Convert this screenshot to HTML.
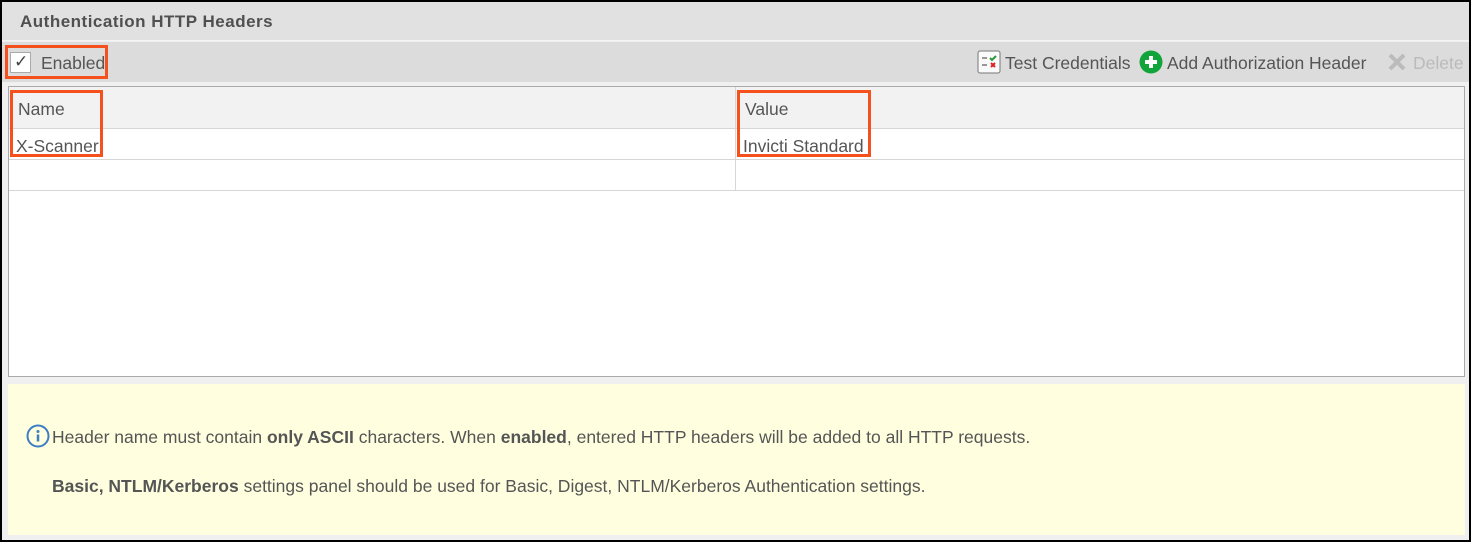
<!DOCTYPE html>
<html><head><style>
*{margin:0;padding:0;box-sizing:border-box}
body{width:1471px;height:542px;background:#000;font-family:"Liberation Sans",sans-serif;color:#555;overflow:hidden;position:relative}
.wrap{position:absolute;left:2px;top:2px;width:1467px;height:538px;background:#f0f0f0}
.title{position:absolute;left:0;top:0;width:100%;height:39px;background:#e1e1e1;border-bottom:1px solid #f4f4f4}
.title span{position:absolute;left:18px;top:10px;font-weight:bold;font-size:17px;letter-spacing:0.5px;color:#505050}
.tb{position:absolute;left:0;top:40px;width:100%;height:40px;background:#dcdcdc;font-size:17.5px}
.abs{position:absolute}
.red{position:absolute;border:3px solid #f4511e}
.table{position:absolute;left:6px;top:84px;width:1457px;height:291px;background:#fff;border:1px solid #aaa}
.row{position:absolute;left:0;width:100%;border-bottom:1px solid #d6d6d6;font-size:17.5px}
.info{position:absolute;left:6px;top:382px;width:1457px;height:151px;background:#ffffe0;font-size:17.5px}
</style></head><body>
<div class="wrap">
<div class="title"><span>Authentication HTTP Headers</span></div>
<div class="tb">
 <div class="abs" style="left:8px;top:10px;width:21px;height:21px;background:#fff;border:1px solid #aaa"></div>
 <div class="abs" style="left:12px;top:10px;font-size:17px;color:#444">✓</div>
 <div class="abs" style="left:39px;top:11px">Enabled</div>
 <svg class="abs" style="left:975px;top:8px" width="24" height="24" viewBox="0 0 24 24"><rect x="1" y="1" width="22" height="22" rx="2" fill="#fafafa" stroke="#777"/><path d="M5 8h5M5 15h5" stroke="#777" stroke-width="1.5"/><path d="M13 8l2 2 4-4" stroke="#2a9a3a" stroke-width="2" fill="none"/><path d="M14 13l4 4M18 13l-4 4" stroke="#d22" stroke-width="2"/></svg>
 <div class="abs" style="left:1003px;top:11px">Test Credentials</div>
 <svg class="abs" style="left:1137px;top:8px" width="24" height="24" viewBox="0 0 24 24"><circle cx="12" cy="12" r="11.5" fill="#10a53a"/><path d="M12 6v12M6 12h12" stroke="#fff" stroke-width="4"/></svg>
 <div class="abs" style="left:1165px;top:11px">Add Authorization Header</div>
 <svg class="abs" style="left:1385px;top:10px" width="20" height="20" viewBox="0 0 20 20"><path d="M3 3l14 14M17 3L3 17" stroke="#bbb" stroke-width="4"/></svg>
 <div class="abs" style="left:1411px;top:11px;color:#bbb">Delete</div>
</div>
<div class="table">
 <div class="row" style="top:0;height:42px;background:#f2f2f2"><span class="abs" style="left:9px;top:12px">Name</span><span class="abs" style="left:736px;top:12px">Value</span></div>
 <div class="row" style="top:42px;height:31px"><span class="abs" style="left:7px;top:7px">X-Scanner</span><span class="abs" style="left:734px;top:7px">Invicti Standard</span></div>
 <div class="row" style="top:73px;height:31px"></div>
 <div class="abs" style="left:726px;top:0;width:1px;height:104px;background:#d6d6d6"></div>
</div>
<div class="info">
 <svg class="abs" style="left:18px;top:40px" width="24" height="24" viewBox="0 0 24 24"><circle cx="12" cy="12" r="10.5" fill="none" stroke="#3c7dc4" stroke-width="2"/><circle cx="12" cy="7.5" r="1.5" fill="#3c7dc4"/><path d="M12 10.5v7" stroke="#3c7dc4" stroke-width="2.5"/></svg>
 <div class="abs" style="left:44px;top:43px">Header name must contain <b>only ASCII</b> characters. When <b>enabled</b>, entered HTTP headers will be added to all HTTP requests.</div>
 <div class="abs" style="left:44px;top:92px"><b>Basic, NTLM/Kerberos</b> settings panel should be used for Basic, Digest, NTLM/Kerberos Authentication settings.</div>
</div>
</div>
<div class="red" style="left:5px;top:45px;width:103px;height:34px"></div>
<div class="red" style="left:10px;top:90px;width:93px;height:67px"></div>
<div class="red" style="left:737px;top:90px;width:134px;height:67px"></div>
</body></html>
